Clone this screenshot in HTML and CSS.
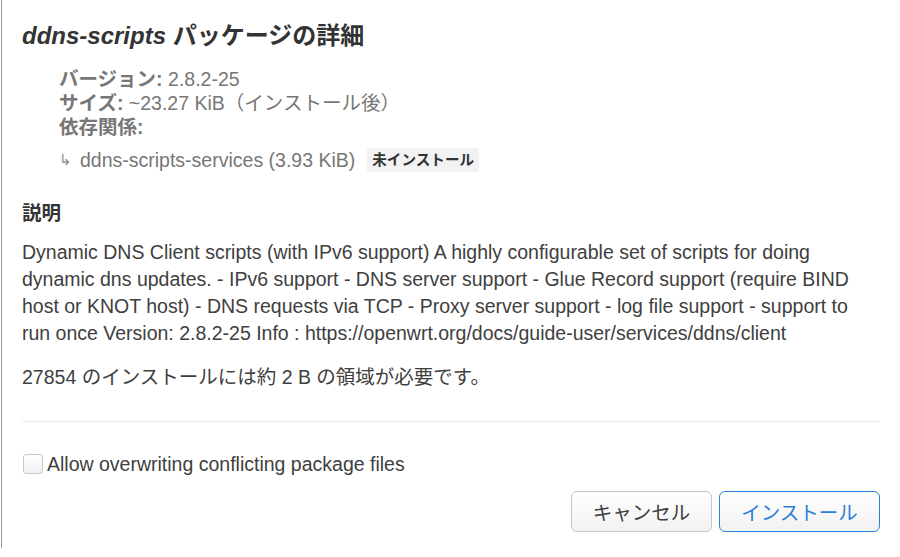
FILE: index.html
```html
<!DOCTYPE html>
<html lang="ja">
<head>
<meta charset="utf-8">
<link rel="stylesheet" href="styles.css">
</head>
<body>
<div class="modal">
  <h4 class="title"><em>ddns-scripts</em> パッケージの詳細</h4>
  <ul class="meta">
    <li><strong>バージョン: </strong>2.8.2-25</li>
    <li><strong>サイズ: </strong>~23.27 KiB（インストール後）</li>
    <li><strong>依存関係: </strong></li>
    <li class="dep"><span class="arrow">↳</span><span>ddns-scripts-services (3.93 KiB)</span><span class="badge">未インストール</span></li>
  </ul>
  <h5 class="section">説明</h5>
  <p class="desc">Dynamic DNS Client scripts (with IPv6 support) A highly configurable set of scripts for doing dynamic dns updates. - IPv6 support - DNS server support - Glue Record support (require BIND host or KNOT host) - DNS requests via TCP - Proxy server support - log file support - support to run once Version: 2.8.2-25 Info : https://openwrt.org/docs/guide-user/services/ddns/client</p>
  <p class="space">27854 のインストールには約 2 B の領域が必要です。</p>
  <hr class="rule">
  <label class="check"><span class="box"></span>Allow overwriting conflicting package files</label>
  <div class="actions">
    <button class="btn">キャンセル</button>
    <button class="btn primary">インストール</button>
  </div>
</div>
</body>
</html>
```

FILE: styles.css
```css
html, body {
  margin: 0;
  padding: 0;
  background: #fff;
}
body {
  font-family: "Liberation Sans", Arial, "Noto Sans CJK JP", sans-serif;
  color: #404040;
  width: 900px;
  height: 557px;
  overflow: hidden;
}
.modal {
  margin-left: 1px;
  border-left: 1px solid #9a9a9a;
  height: 548px;
  padding: 0 20px 0 20px;
  box-sizing: border-box;
}
.title {
  margin: 0;
  padding-top: 21px;
  font-size: 24px;
  line-height: 30px;
  font-weight: bold;
  color: #333;
}
.title em {
  font-style: italic;
}
.meta {
  list-style: none;
  margin: 16px 0 0 0;
  padding: 0 0 0 37px;
  font-size: 19.5px;
  line-height: 24px;
  color: #777;
}
.meta strong {
  font-weight: bold;
}
.meta .dep {
  margin-top: 9px;
  display: flex;
  align-items: center;
}
.arrow {
  font-size: 15px;
  margin-right: 8px;
  color: #888;
}
.badge {
  display: inline-block;
  background: #f2f2f2;
  color: #333;
  font-weight: bold;
  font-size: 14.6px;
  line-height: 24px;
  padding: 0 5px;
  border-radius: 3px;
  margin-left: 12px;
}
.section {
  margin: 29px 0 0 0;
  font-size: 19.5px;
  line-height: 24px;
  font-weight: bold;
  color: #333;
}
.desc {
  margin: 14px 0 0 0;
  font-size: 19.5px;
  line-height: 27px;
  color: #404040;
}
.space {
  margin: 17px 0 0 0;
  font-size: 19.5px;
  line-height: 27px;
}
.rule {
  border: 0;
  border-top: 1px solid #eaeaea;
  margin: 30px 0 0 0;
}
.check {
  display: flex;
  align-items: center;
  margin-top: 31px;
  font-size: 19.5px;
  line-height: 22px;
  color: #404040;
}
.box {
  width: 20px;
  height: 20px;
  border: 1px solid #c8c8c8;
  border-radius: 3px;
  background: linear-gradient(#fff, #f0f0f0);
  margin-right: 4px;
  margin-left: 1px;
  box-sizing: border-box;
}
.actions {
  display: flex;
  justify-content: flex-end;
  gap: 7px;
  margin-top: 16px;
}
.btn {
  font-family: "Noto Sans CJK JP", "Liberation Sans", sans-serif;
  font-size: 19.5px;
  height: 41px;
  padding: 0;
  border: 1px solid #c6c6c6;
  border-radius: 6px;
  background: linear-gradient(#fff, #f2f2f2);
  color: #404040;
  width: 141px;
}
.btn.primary {
  width: 161px;
  border-color: #2b7fd6;
  color: #2b7fd6;
}
```
